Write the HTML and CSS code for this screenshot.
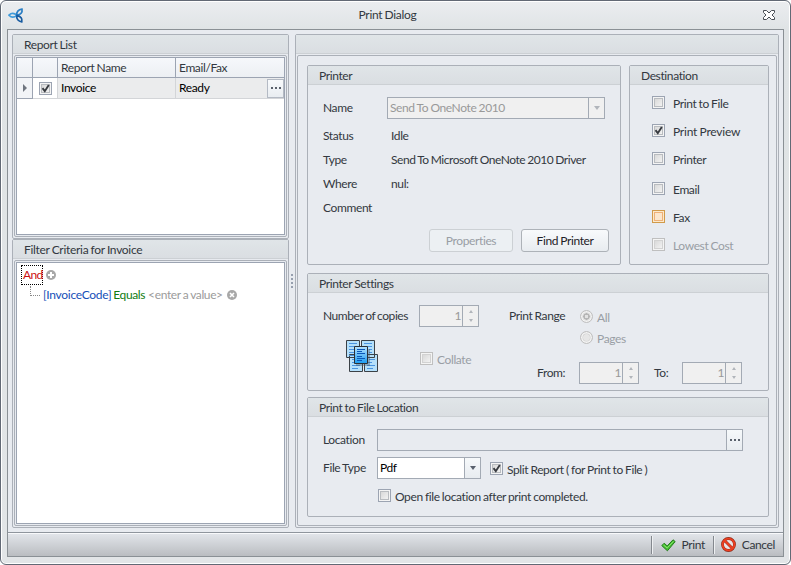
FILE: index.html
```html
<!DOCTYPE html>
<html lang="en">
<head>
<meta charset="utf-8">
<title>Print Dialog</title>
<link rel="stylesheet" href="styles.css">
</head>
<body>
<div class="window">
  <header class="titlebar">
    <svg class="logo" width="16" height="15" viewBox="0 0 16 15" fill="none" stroke-width="1.7">
      <path d="M9 7.4C6 4.800 3 5.200 1 7.200c2 2.200 5 2.600 8 .2z" stroke="#3e9ada"/>
      <path d="M9 7.200C8 3.800 10.500 1.600 14 1.200c.6 3.200-1.200 5.800-5 6z" stroke="#2a7ec4"/>
      <path d="M9 7.600c-1 3.200 1.400 5.600 4.800 6.200.8-3.200-1-5.600-4.800-6.200z" stroke="#165aa0"/>
    </svg>
    <h1 class="title">Print Dialog</h1>
    <svg class="close" width="12" height="10" viewBox="0 0 12 10" fill="#fff" stroke="#4a4e55">
      <path d="M.5.5h3L6 3 8.500.5h3v2L9 5l2.500 2.500v2h-3L6 7 3.500 9.500h-3v-2L3 5 .5 2.500z"/>
    </svg>
  </header>
  <div class="frame">
    <main class="content">
      <div class="left">
        <section class="panel reports">
          <h2>Report List</h2>
          <div class="well">
            <div class="box">
              <div class="grid head"><span></span><span></span><span>Report Name</span><span>Email/Fax</span></div>
              <div class="grid row">
                <span><i class="marker"></i></span>
                <span class="white"><i class="check"><svg width="13" height="13" viewBox="0 0 13 13"><path d="M3.500 6.200l2.300 3L9.800 3" /></svg></i></span>
                <span>Invoice</span><span>Ready<b class="more"><svg class="dots" width="10" height="2"><path d="M0 0h2v2H0zM4 0h2v2H4zM8 0h2v2H8z"/></svg></b></span>
              </div>
            </div>
          </div>
        </section>
        <section class="panel filter">
          <h2>Filter Criteria for Invoice</h2>
          <div class="well">
            <div class="box tree">
              <div class="node"><span class="and">And</span>
                <svg width="10" height="10" viewBox="0 0 10 10"><circle cx="5" cy="5" r="5" fill="#a8a8a8"/><path d="M5 2v6M2 5h6" stroke="#fff" stroke-width="2"/></svg>
              </div>
              <div class="node child"><i class="branch"></i><span class="field">[InvoiceCode]</span><span class="op">Equals</span><span class="val">&lt;enter a value&gt;</span>
                <svg width="10" height="10" viewBox="0 0 10 10"><circle cx="5" cy="5" r="5" fill="#a8a8a8"/><path d="M3 3l4 4M7 3L3 7" stroke="#fff" stroke-width="1.600"/></svg>
              </div>
            </div>
          </div>
        </section>
      </div>
      <div class="splitter"><i></i><i></i><i></i><i></i></div>
      <section class="panel right">
        <h2></h2>
        <div class="well groups">
          <div class="pair">
            <section class="group printer">
              <h3>Printer</h3>
              <div class="body">
                <div class="line first"><span class="key">Name</span><span class="input combo off"><em>Send To OneNote 2010</em><b><i class="down"></i></b></span></div>
                <div class="line"><span class="key">Status</span><span class="out">Idle</span></div>
                <div class="line"><span class="key">Type</span><span class="out type">Send To Microsoft OneNote 2010 Driver</span></div>
                <div class="line"><span class="key">Where</span><span class="out">nul:</span></div>
                <div class="line"><span class="key">Comment</span></div>
                <div class="buttons"><button disabled>Properties</button><button class="find">Find Printer</button></div>
              </div>
            </section>
            <section class="group dest">
              <h3>Destination</h3>
              <div class="body">
                <label><i class="check"></i><span>Print to File</span></label>
                <label class="preview"><i class="check"><svg width="13" height="13" viewBox="0 0 13 13"><path d="M3.500 6.200l2.300 3L9.800 3" /></svg></i><span>Print Preview</span></label>
                <label><i class="check"></i><span>Printer</span></label>
                <label class="low"><i class="check"></i><span>Email</span></label>
                <label><i class="check hot"></i><span>Fax</span></label>
                <label class="dim"><i class="check"></i><span>Lowest Cost</span></label>
              </div>
            </section>
          </div>
          <section class="group settings">
            <h3>Printer Settings</h3>
            <div class="body">
              <div class="copies">
                <div class="line"><span class="key">Number of copies</span><span class="input spin"><em>1</em><b><i class="up"></i><i class="down"></i></b></span></div>
                <div class="collate">
                  <svg width="33" height="33" viewBox="0 0 33 33">
                    <defs><linearGradient id="g" x2="0" y2="1"><stop offset="0" stop-color="#b5e2ff"/><stop offset="1" stop-color="#1b9bf0"/></linearGradient></defs>
                    <g fill="#b5e0fb" stroke="#3b4147"><path d="M.5.500h13v17H.5zM15.500.500h13v17h-13zM3.500 14.500h13v17h-13zM18.500 14.500h13v17h-13z"/></g>
                    <path d="M3 3.500h8M3 6.500h6M3 9.500h8M3 12.500h5M3 15.500h5M18 3.500h8M18 6.500h8M23 9.500h3M23 12.500h3M6 19.500h3M6 22.500h5M6 25.500h8M6 28.500h6M23 19.500h6M21 22.500h5M21 25.500h8M21 28.500h6" stroke="#4a94e0"/>
                    <path d="M10 9h14v17H10z" fill="#456" opacity=".4"/>
                    <path d="M8.500 6.500h13v17h-13z" fill="url(#g)" stroke="#2b3036"/>
                    <path d="M11 9.500h8M11 11.500h5M11 13.500h8M11 16.500h5M11 18.500h8M11 20.500h5" stroke="#0b57b8"/>
                  </svg>
                  <label class="dim"><i class="check"></i><span>Collate</span></label>
                </div>
              </div>
              <div class="range">
                <div class="line"><span class="key">Print Range</span>
                  <div class="radios dim"><label><i class="radio on"></i><span>All</span></label><label><i class="radio"></i><span>Pages</span></label></div>
                </div>
                <div class="line pages"><span class="key">From:</span><span class="input spin"><em>1</em><b><i class="up"></i><i class="down"></i></b></span><span class="key to">To:</span><span class="input spin"><em>1</em><b><i class="up"></i><i class="down"></i></b></span></div>
              </div>
            </div>
          </section>
          <section class="group file">
            <h3>Print to File Location</h3>
            <div class="body">
              <div class="line"><span class="key">Location</span><span class="input path"><em></em><b class="lit"><svg class="dots" width="10" height="2"><path d="M0 0h2v2H0zM4 0h2v2H4zM8 0h2v2H8z"/></svg></b></span></div>
              <div class="line second"><span class="key">File Type</span><span class="input filetype"><em>Pdf</em><b class="lit"><i class="down"></i></b></span><label><i class="check"><svg width="13" height="13" viewBox="0 0 13 13"><path d="M3.500 6.200l2.300 3L9.800 3" /></svg></i><span>Split Report ( for Print to File )</span></label></div>
              <label class="open"><i class="check"></i><span>Open file location after print completed.</span></label>
            </div>
          </section>
        </div>
      </section>
    </main>
    <footer class="actions">
      <span class="action"><svg width="15" height="14" viewBox="0 0 15 14"><path d="M.8 7.600L3.200 5.200l3 2.800L12 1.800l2.200 1.800L6.400 12.800z" fill="#43c02f" stroke="#257a1c"/><path d="M2.500 7l3.700 3L12.500 3.300" fill="none" stroke="#8be070"/></svg><span>Print</span></span>
      <span class="action cancel"><svg width="15" height="15" viewBox="0 0 15 15"><circle cx="7.500" cy="7.500" r="6" fill="#e9e4e6" stroke="#8e2b1b" stroke-width="2.800"/><path d="M3.500 3.500l8 8" stroke="#8e2b1b" stroke-width="2.600"/><circle cx="7.500" cy="7.500" r="5.900" fill="none" stroke="#ee4022" stroke-width="1.900"/><path d="M3.500 3.500l8 8" stroke="#ee4022" stroke-width="1.900"/></svg><span>Cancel</span></span>
    </footer>
  </div>
</div>
</body>
</html>
```
FILE: styles.css
```css
* { box-sizing: border-box; }
body { margin: 0; background: #fff; font: 12px/16px Lato, "Liberation Sans", sans-serif; letter-spacing: -.38px; word-spacing: -.5px; color: #333840; }
h1, h2, h3 { margin: 0; font-size: 12px; font-weight: 400; }
em, i { font-style: normal; }
b { font-weight: 400; }
svg { display: block; flex: none; }

.window { width: 791px; height: 565px; border: 1px solid #626975; border-radius: 6px; box-shadow: inset 0 0 0 1px #fff; background: linear-gradient(#ebedf0, #dfe3e5 30px, #e2e5e7); padding: 0 6px 7px 6px; display: flex; flex-direction: column; }
.titlebar { height: 28px; flex: none; display: flex; align-items: center; padding: 0 9px 0 1px; }
.title { flex: 1; text-align: center; padding-right: 12px; letter-spacing: -.3px; }
.close { margin-bottom: 1px; }
.frame { flex: 1; border: 1px solid #8a9095; background: #e8ebf0; display: flex; flex-direction: column; }
.content { height: 502px; flex: none; padding: 4px; display: flex; }

.left { width: 277px; flex: none; display: flex; flex-direction: column; }
.panel { border: 1px solid #abb0b8; border-radius: 2px; padding: 0 1px 1px; display: flex; flex-direction: column; }
.panel h2, .group h3 { height: 19px; flex: none; line-height: 20px; padding-left: 11px; border-bottom: 1px solid #ccd0d4; background: linear-gradient(#e0e5e8, #dadee2); }
.panel h2 { margin: 0 -1px 1px; }
.filter h2 { letter-spacing: -.3px; }
.well { flex: 1; border: 1px solid #abb0b8; border-radius: 2px; padding: 1px; }
.box { height: 100%; background: #fff; border: 1px solid #9ca4b2; }
.reports { height: 205px; }
.filter { height: 289px; }

.grid { display: grid; grid-template-columns: 16px 25px 118px 1fr; height: 20px; }
.grid span { border-right: 1px solid #9ca4b2; border-bottom: 1px solid #9ca4b2; padding-left: 3px; display: flex; align-items: center; }
.grid.head span { background: linear-gradient(#f6f8fb, #eceff3); }
.row { height: 21px; color: #000; }
.row span { background: #ebeced; border-color: #d3d5d8; }
.row span:first-child { background: #f2f4f7; border-color: #9ca4b2; padding-left: 6px; }
.row span.white { background: #fff; padding-left: 6px; }
.grid span:last-child { border-right: 0; justify-content: space-between; }
.more { width: 17px; height: 19px; border: 1px solid #b4bac4; background: linear-gradient(#f8fafc, #e9edf1); display: flex; align-items: center; justify-content: center; }
.dots { fill: #5a616c; }
.marker { border: 4px solid transparent; border-left-color: #707680; border-right: 0; }

.tree { padding: 2px 4px; }
.node { display: flex; align-items: center; height: 20px; }
.and { color: #c11; border: 1px dotted #000; height: 20px; width: 22px; line-height: 18px; padding-left: 1px; margin-right: 3px; flex: none; white-space: nowrap; letter-spacing: -.6px; }
.child { padding-left: 9px; }
.branch { width: 10px; height: 10px; border: dotted #888; border-width: 0 0 1px 1px; margin: -9px 3px 0 0; }
.field { color: #1550b8; letter-spacing: -.3px; }
.op { color: #107c10; margin: 0 3px 0 2px; }
.val { color: #9b9b9b; margin-right: 4px; }

.splitter { width: 6px; flex: none; display: flex; flex-direction: column; align-items: center; justify-content: center; gap: 2px; }
.splitter i { width: 2px; height: 2px; background: #969fae; }

.right { width: 484px; }
.groups { padding: 9px 7px 0 9px; display: flex; flex-direction: column; }
.pair { display: flex; gap: 8px; margin-bottom: 8px; }
.group { border: 1px solid #abb0b8; border-radius: 2px; }
.group .body { padding-left: 15px; }
.printer { width: 314px; height: 200px; }
.dest { width: 140px; height: 200px; }
.settings { height: 118px; margin-bottom: 6px; }
.file { height: 120px; }

.line { display: flex; align-items: center; height: 24px; }
.key { width: 68px; flex: none; }
.input { height: 22px; border: 1px solid #a3aab4; display: flex; margin-left: -4px; }
.input em { flex: 1; padding-left: 2px; line-height: 20px; }
.input b { width: 16px; border-left: 1px solid #a3aab4; display: flex; flex-direction: column; align-items: center; justify-content: center; gap: 6px; }
.input .lit { background: linear-gradient(#f6f9fb, #e8ecf0); }
.input .lit .down { border-top-color: #59616e; }
.down { border: 3.500px solid transparent; border-top: 4px solid #b1b5bb; border-bottom: 0; }
.up { border: 2.500px solid transparent; border-bottom: 3px solid #b1b5bb; border-top: 0; }
.spin .down { border-width: 3px 2.500px 0; }
.combo { width: 218px; }
.off, .spin { background: #f0f0f0; color: #999; }
.out { white-space: nowrap; }
.type { letter-spacing: -.46px; }
.printer .body { padding-top: 12px; }
.printer .first { height: 22px; margin-bottom: 5px; }
.buttons { display: flex; gap: 8px; padding: 9px 0 0 106px; }
button { width: 84px; height: 23px; padding: 0; font: inherit; letter-spacing: inherit; word-spacing: inherit; color: #333840; border: 1px solid #adb2b8; border-radius: 3px; background: linear-gradient(#f8fafc, #e8ecf0); }
button:disabled { color: #999ea5; border-color: #ccd0d4; background: #ecf0f3; }
.find { width: 88px; color: #1e2127; }

label { display: flex; height: 13px; white-space: nowrap; }
label span { margin-left: 4px; line-height: 16px; }
.check { width: 13px; height: 13px; flex: none; border: 1px solid #9ca4b2; background: linear-gradient(135deg, #d9d9d9, #f2f2f2) 2px 2px / 7px 7px no-repeat #f4f4f4; box-shadow: inset 0 0 0 1px #f4f4f4, inset 0 0 0 2px #b9bcc0; }
.check svg { margin: -1px; }
.check path { fill: none; stroke: #383b40; stroke-width: 1.900; }
.check.hot { border-color: #d19a4a; background: #fbe6cc; box-shadow: inset 0 0 0 1px #fbe9cb, inset 0 0 0 2px #eeb077; }
.dim { color: #999ea5; }
.dim .check { border-color: #bfbfbf; box-shadow: inset 0 0 0 1px #f4f4f4, inset 0 0 0 2px #d2d2d2; }
.dest .body { padding: 11px 0 0 22px; }
.dest label { margin-bottom: 15px; }
.dest label span { margin-left: 8px; }
.dest label.low { margin-top: 17px; }
.preview { letter-spacing: -.22px; }

.settings .body { display: flex; padding-top: 12px; }
.settings .body .line { height: 22px; }
.copies { width: 186px; }
.copies .key { width: 96px; letter-spacing: -.45px; }
.spin { width: 60px; margin-left: 0; }
.spin em { text-align: right; padding-right: 1px; }
.collate { display: flex; padding: 13px 0 0 23px; gap: 41px; }
.collate label { margin-top: 12px; }
.settings .range > .line:first-child { height: 38px; align-items: flex-start; }
.range .key { width: 71px; line-height: 22px; }
.radios { padding-top: 5px; }
.radios label { margin-bottom: 8px; }
.radio { width: 13px; height: 13px; border: 1px solid #bfbfbf; border-radius: 50%; background: #e6e6e6; box-shadow: inset 0 0 0 1.500px #f4f4f4, inset 0 0 0 2px #ccc; }
.radio.on { background: radial-gradient(circle, #e2e2e2 0 1.500px, #b5b5b5 2px 3px, #f0f0f0 3.500px); }
.range .pages { margin-top: 19px; padding-left: 28px; }
.range .pages .key { width: 42px; }
.range .pages .to { width: 28px; margin-left: 15px; }

.file .body { padding-top: 12px; }
.file .line { height: 22px; }
.file .key { width: 58px; }
.file .second { margin: 6px 0 10px; }
.path { width: 366px; }
.filetype { width: 104px; background: #fff; color: #000; }
.line label { margin-left: 9px; }
.range .line label { margin-left: 0; }
.open { margin-left: 55px; }

.actions { flex: 1; display: flex; justify-content: flex-end; align-items: center; border-top: 1px solid #8f959d; box-shadow: inset 0 1px #f8f9fb; background: linear-gradient(#e3e6eb, #babdc1); }
.action { display: flex; align-items: center; height: 18px; padding: 0 8px 0 9px; gap: 5px; border-left: 1px solid #84888e; box-shadow: inset 1px 0 #eef0f2; }
.action.cancel { padding: 0 8px 0 7px; gap: 6px; }
```
